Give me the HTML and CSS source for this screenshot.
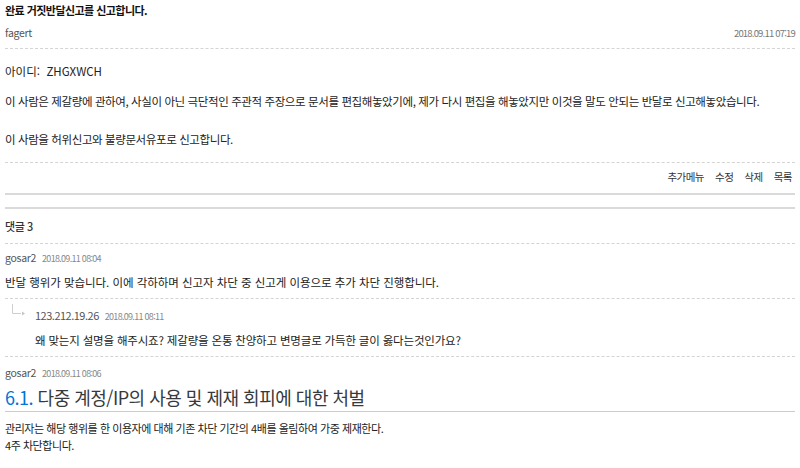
FILE: index.html
```html
<!DOCTYPE html>
<html lang="ko">
<head>
<meta charset="utf-8">
<title>완료 거짓반달신고를 신고합니다.</title>
<link rel="stylesheet" href="styles.css">
</head>
<body>
<div class="page">
  <div class="post-head">
    <div class="post-title">완료 거짓반달신고를 신고합니다.</div>
    <div class="post-meta">
      <span class="author">fagert</span>
      <span class="date">2018.09.11 07:19</span>
    </div>
  </div>
  <div class="post-body">
    <p class="p1">아이디:&nbsp; ZHGXWCH</p>
    <p class="p2">이 사람은 제갈량에 관하여, 사실이 아닌 극단적인 주관적 주장으로 문서를 편집해놓았기에, 제가 다시 편집을 해놓았지만 이것을 말도 안되는 반달로 신고해놓았습니다.</p>
    <p class="p3">이 사람을 허위신고와 불량문서유포로 신고합니다.</p>
  </div>
  <div class="post-menu">
    <span class="menu-item">추가메뉴</span>
    <span class="menu-item">수정</span>
    <span class="menu-item">삭제</span>
    <span class="menu-item">목록</span>
  </div>
  <div class="comments">
    <div class="comments-title">댓글 3</div>
    <div class="comment c1">
      <div class="c-head"><span class="c-author">gosar2</span><span class="c-date">2018.09.11 08:04</span></div>
      <div class="c-text">반달 행위가 맞습니다. 이에 각하하며 신고자 차단 중 신고게 이용으로 추가 차단 진행합니다.</div>
    </div>
    <div class="comment reply">
      <div class="reply-arrow">
        <svg width="16" height="12" viewBox="0 0 16 12"><path d="M1.5 0 V9.5 H10" fill="none" stroke="#cfcfcf" stroke-width="1"/><path d="M11 7.5 L14 9.5 L11 11.5 Z" fill="#c4c4c4"/></svg>
      </div>
      <div class="reply-main">
        <div class="c-head"><span class="c-author ip">123.212.19.26</span><span class="c-date">2018.09.11 08:11</span></div>
        <div class="c-text">왜 맞는지 설명을 해주시죠? 제갈량을 온통 찬양하고 변명글로 가득한 글이 옳다는것인가요?</div>
      </div>
    </div>
    <div class="comment c3">
      <div class="c-head"><span class="c-author">gosar2</span><span class="c-date">2018.09.11 08:06</span></div>
      <h2 class="wiki-heading"><span class="num">6.1.</span> 다중 계정/IP의 사용 및 제재 회피에 대한 처벌</h2>
      <div class="wiki-text">관리자는 해당 행위를 한 이용자에 대해 기존 차단 기간의 4배를 올림하여 가중 제재한다.<br>4주 차단합니다.</div>
    </div>
  </div>
</div>
</body>
</html>
```
FILE: styles.css
```css
html, body {
  margin: 0;
  padding: 0;
  background: #fff;
}
body {
  font-family: "Noto Sans CJK KR", "Noto Sans", sans-serif;
  color: #222;
}
.page {
  padding: 0 5px;
}
.post-head {
  padding-top: 3px;
  padding-bottom: 8px;
  border-bottom: 1px dashed #d4d4d4;
}
.post-title {
  font-size: 11px;
  line-height: 15px;
  font-weight: bold;
  color: #111;
  letter-spacing: -0.55px;
}
.post-meta {
  margin-top: 7.5px;
  display: flex;
  justify-content: space-between;
  align-items: center;
  height: 14px;
  line-height: 14px;
}
.author {
  font-size: 10.5px;
  color: #555;
  letter-spacing: -0.3px;
}
.date {
  font-size: 9.5px;
  color: #777;
  letter-spacing: -0.8px;
}
.post-body {
  padding-top: 13px;
  padding-bottom: 13.5px;
  border-bottom: 1px dashed #d4d4d4;
}
.post-body p {
  margin: 0;
  font-size: 11.5px;
  line-height: 18px;
  letter-spacing: -0.4px;
  color: #222;
}
.post-body .p1 { margin-bottom: 12.5px; letter-spacing: 0; }
.post-body .p2 { margin-bottom: 20px; }
.post-menu {
  display: flex;
  justify-content: flex-end;
  gap: 11px;
  padding: 7.5px 3px 8.5px 0;
  line-height: 14px;
  border-bottom: 2px solid #dadada;
}
.menu-item {
  font-size: 10.5px;
  color: #333;
  letter-spacing: -0.5px;
}
.comments {
  margin-top: 12.5px;
  border-top: 2px solid #dadada;
}
.comments-title {
  padding-top: 9.5px;
  padding-bottom: 9px;
  font-size: 11px;
  line-height: 15px;
  font-weight: 500;
  color: #333;
  letter-spacing: -0.4px;
  border-bottom: 1px dashed #d4d4d4;
}
.comment {
  border-bottom: 1px dashed #d4d4d4;
}
.c1 { padding: 7px 0 7.5px; }
.reply { padding: 9px 0 8.5px; display: flex; }
.c3 { padding-top: 8.5px; border-bottom: none; }
.reply-arrow {
  width: 30px;
  flex: none;
  padding-left: 6px;
  box-sizing: border-box;
  margin-top: -4px;
}
.reply-arrow svg { display: block; width: 16px; height: 12px; }
.c-head {
  height: 14px;
  line-height: 14px;
  display: flex;
  align-items: baseline;
  gap: 6px;
}
.c-author {
  font-size: 10.5px;
  color: #555;
  letter-spacing: -0.3px;
}
.c-author.ip {
  font-size: 11px;
  letter-spacing: -0.5px;
}
.c-date {
  font-size: 9px;
  color: #888;
  letter-spacing: -0.7px;
}
.c-text {
  margin-top: 9.5px;
  font-size: 11.5px;
  line-height: 16px;
  letter-spacing: -0.05px;
  color: #222;
}
.reply .c-text { margin-top: 10px; letter-spacing: -0.18px; }
.wiki-heading {
  margin: 5px 0 0;
  padding-bottom: 2.5px;
  font-size: 18px;
  line-height: 24px;
  font-weight: normal;
  color: #373a3c;
  letter-spacing: -0.5px;
  border-bottom: 1px solid #ccc;
}
.wiki-heading .num {
  color: #0275d8;
}
.wiki-text {
  margin-top: 8px;
  font-size: 11px;
  line-height: 17px;
  letter-spacing: -0.45px;
  color: #222;
}
```
